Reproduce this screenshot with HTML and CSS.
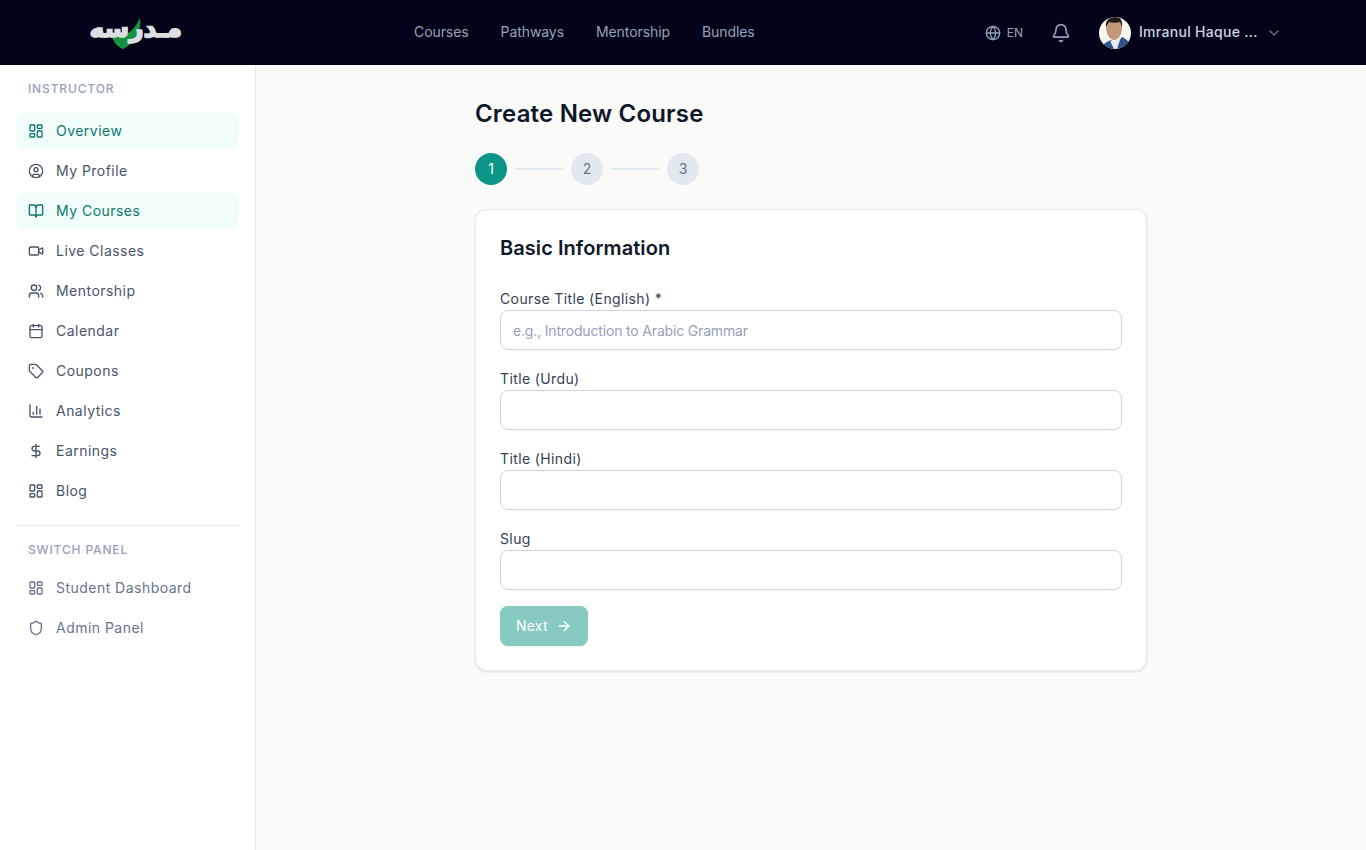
FILE: index.html
```html
<!DOCTYPE html>
<html lang="en">
<head>
<meta charset="utf-8">
<title>Create New Course</title>
<link rel="stylesheet" href="styles.css">
</head>
<body>
<svg class="sprite" aria-hidden="true">
  <symbol id="i-dash" viewBox="0 0 24 24"><rect x="3" y="3" width="7" height="9" rx="1"/><rect x="14" y="3" width="7" height="5" rx="1"/><rect x="14" y="12" width="7" height="9" rx="1"/><rect x="3" y="16" width="7" height="5" rx="1"/></symbol>
  <symbol id="i-user" viewBox="0 0 24 24"><circle cx="12" cy="12" r="10"/><circle cx="12" cy="10" r="3"/><path d="M7 20.662V19a2 2 0 0 1 2-2h6a2 2 0 0 1 2 2v1.662"/></symbol>
  <symbol id="i-book" viewBox="0 0 24 24"><path d="M12 7v14"/><path d="M3 18a1 1 0 0 1-1-1V4a1 1 0 0 1 1-1h5a4 4 0 0 1 4 4 4 4 0 0 1 4-4h5a1 1 0 0 1 1 1v13a1 1 0 0 1-1 1h-6a3 3 0 0 0-3 3 3 3 0 0 0-3-3z"/></symbol>
  <symbol id="i-video" viewBox="0 0 24 24"><path d="m16 13 5.223 3.482a.5.5 0 0 0 .777-.416V7.87a.5.5 0 0 0-.752-.432L16 10.5"/><rect x="2" y="6" width="14" height="12" rx="2"/></symbol>
  <symbol id="i-users" viewBox="0 0 24 24"><path d="M16 21v-2a4 4 0 0 0-4-4H6a4 4 0 0 0-4 4v2"/><circle cx="9" cy="7" r="4"/><path d="M22 21v-2a4 4 0 0 0-3-3.87"/><path d="M16 3.13a4 4 0 0 1 0 7.75"/></symbol>
  <symbol id="i-cal" viewBox="0 0 24 24"><path d="M8 2v4"/><path d="M16 2v4"/><rect x="3" y="4" width="18" height="18" rx="2"/><path d="M3 10h18"/></symbol>
  <symbol id="i-tag" viewBox="0 0 24 24"><path d="M12.586 2.586A2 2 0 0 0 11.172 2H4a2 2 0 0 0-2 2v7.172a2 2 0 0 0 .586 1.414l8.704 8.704a2.426 2.426 0 0 0 3.42 0l6.58-6.58a2.426 2.426 0 0 0 0-3.42z"/><circle cx="7.5" cy="7.5" r=".5"/></symbol>
  <symbol id="i-chart" viewBox="0 0 24 24"><path d="M3 3v16a2 2 0 0 0 2 2h16"/><path d="M18 17V9"/><path d="M13 17V5"/><path d="M8 17v-3"/></symbol>
  <symbol id="i-dollar" viewBox="0 0 24 24"><path d="M12 2v20"/><path d="M17 5H9.5a3.5 3.5 0 0 0 0 7h5a3.5 3.5 0 0 1 0 7H6"/></symbol>
  <symbol id="i-shield" viewBox="0 0 24 24"><path d="M20 13c0 5-3.5 7.5-7.66 8.95a1 1 0 0 1-.67-.01C7.5 20.5 4 18 4 13V6a1 1 0 0 1 1-1c2 0 4.5-1.2 6.24-2.72a1.17 1.17 0 0 1 1.52 0C14.51 3.81 17 5 19 5a1 1 0 0 1 1 1z"/></symbol>
  <symbol id="i-globe" viewBox="0 0 24 24"><circle cx="12" cy="12" r="10"/><path d="M12 2a14.5 14.5 0 0 0 0 20 14.5 14.5 0 0 0 0-20"/><path d="M2 12h20"/></symbol>
  <symbol id="i-bell" viewBox="0 0 24 24"><path d="M10.268 21a2 2 0 0 0 3.464 0"/><path d="M3.262 15.326A1 1 0 0 0 4 17h16a1 1 0 0 0 .74-1.673C19.41 13.956 18 12.499 18 8A6 6 0 0 0 6 8c0 4.499-1.411 5.956-2.738 7.326"/></symbol>
  <symbol id="i-chev" viewBox="0 0 24 24"><path d="m6 9 6 6 6-6"/></symbol>
  <symbol id="i-arrow" viewBox="0 0 24 24"><path d="M5 12h14"/><path d="m12 5 7 7-7 7"/></symbol>
</svg>

<header class="topbar">
  <a class="logo" href="#">
    <svg class="logo-shield" viewBox="0 0 30 32" aria-hidden="true"><path d="M29 0c1 6 0 11-2 15-2 6-8 13-15 16C7 29 2 25 1 17c6 2 15 0 20-5 4-4 6-8 8-12z"/></svg>
    <span class="logo-text" lang="ar" dir="rtl">مـدرسه</span>
  </a>
  <nav class="topnav">
    <a href="#">Courses</a>
    <a href="#">Pathways</a>
    <a href="#">Mentorship</a>
    <a href="#">Bundles</a>
  </nav>
  <div class="top-actions">
    <button class="lang"><svg class="ic ic-16"><use href="#i-globe"/></svg><span>EN</span></button>
    <button class="bell"><svg class="ic ic-20"><use href="#i-bell"/></svg></button>
    <button class="account">
      <svg class="avatar" viewBox="0 0 32 32" aria-hidden="true">
        <rect width="32" height="32" fill="#f7f6f3"/>
        <path d="M2 32c0-4 4-6 10-9l4 5 7-8c4 2 7 4 9 9v3z" fill="#2f5384"/>
        <path d="M11 24l4 8h3l4-12-5 5z" fill="#e8ecf0"/>
        <path d="M7 10c0-5 4-8 9-8 4 0 7 3 7 8 0 7-3 13-8 13-4 0-8-6-8-13z" fill="#c4967a"/>
        <path d="M7 10C6 4 10 0 16 0c5 0 8 3 7 10-1-2-1-4-2-5-4 1-8 1-11 0-1 2-2 3-3 5z" fill="#221a17"/>
      </svg>
      <span class="account-name">Imranul Haque ...</span>
      <svg class="ic ic-16 chev"><use href="#i-chev"/></svg>
    </button>
  </div>
</header>

<div class="shell">
  <aside class="sidebar">
    <h2 class="side-label">Instructor</h2>
    <ul class="side-list">
      <li><a class="side-link active" href="#"><svg class="ic ic-16"><use href="#i-dash"/></svg>Overview</a></li>
      <li><a class="side-link" href="#"><svg class="ic ic-16"><use href="#i-user"/></svg>My Profile</a></li>
      <li><a class="side-link active" href="#"><svg class="ic ic-16"><use href="#i-book"/></svg>My Courses</a></li>
      <li><a class="side-link" href="#"><svg class="ic ic-16"><use href="#i-video"/></svg>Live Classes</a></li>
      <li><a class="side-link" href="#"><svg class="ic ic-16"><use href="#i-users"/></svg>Mentorship</a></li>
      <li><a class="side-link" href="#"><svg class="ic ic-16"><use href="#i-cal"/></svg>Calendar</a></li>
      <li><a class="side-link" href="#"><svg class="ic ic-16"><use href="#i-tag"/></svg>Coupons</a></li>
      <li><a class="side-link" href="#"><svg class="ic ic-16"><use href="#i-chart"/></svg>Analytics</a></li>
      <li><a class="side-link" href="#"><svg class="ic ic-16"><use href="#i-dollar"/></svg>Earnings</a></li>
      <li><a class="side-link" href="#"><svg class="ic ic-16"><use href="#i-dash"/></svg>Blog</a></li>
    </ul>
    <div class="side-switch">
      <h2 class="side-label side-label-tight">Switch Panel</h2>
      <ul class="side-list">
        <li><a class="side-link muted" href="#"><svg class="ic ic-16"><use href="#i-dash"/></svg>Student Dashboard</a></li>
        <li><a class="side-link muted" href="#"><svg class="ic ic-16"><use href="#i-shield"/></svg>Admin Panel</a></li>
      </ul>
    </div>
  </aside>

  <main class="main">
    <div class="content">
      <h1 class="page-title">Create New Course</h1>
      <div class="steps">
        <span class="step current">1</span>
        <span class="step-line"></span>
        <span class="step">2</span>
        <span class="step-line"></span>
        <span class="step">3</span>
      </div>
      <form class="card">
        <h2 class="card-title">Basic Information</h2>
        <div class="fields">
          <div class="field">
            <label class="field-label" for="t-en">Course Title (English) *</label>
            <input class="field-input" id="t-en" type="text" placeholder="e.g., Introduction to Arabic Grammar">
          </div>
          <div class="field">
            <label class="field-label" for="t-ur">Title (Urdu)</label>
            <input class="field-input" id="t-ur" type="text">
          </div>
          <div class="field">
            <label class="field-label" for="t-hi">Title (Hindi)</label>
            <input class="field-input" id="t-hi" type="text">
          </div>
          <div class="field">
            <label class="field-label" for="slug">Slug</label>
            <input class="field-input" id="slug" type="text">
          </div>
        </div>
        <button class="next" type="button">Next<svg class="ic ic-16"><use href="#i-arrow"/></svg></button>
      </form>
    </div>
  </main>
</div>
</body>
</html>
```

FILE: styles.css
```css
* { box-sizing: border-box; }
html, body { margin: 0; height: 100%; }
body {
  font-family: Inter, "Liberation Sans", sans-serif;
  font-size: 14px;
  line-height: 20px;
  color: #0f172a;
  background: #fafaf9;
  overflow: hidden;
}
a { text-decoration: none; color: inherit; }
button { font: inherit; background: none; border: 0; padding: 0; color: inherit; }
ul { list-style: none; margin: 0; padding: 0; }
.sprite { display: none; }
.ic {
  fill: none;
  stroke: currentColor;
  stroke-width: 2;
  stroke-linecap: round;
  stroke-linejoin: round;
  flex: none;
}
.ic-16 { width: 16px; height: 16px; }
.ic-20 { width: 20px; height: 20px; }

/* Top bar */
.topbar {
  height: 65px;
  background: #020319;
  display: flex;
  align-items: center;
  padding: 0 84px 0 90px;
  color: #94a3b8;
}
.logo {
  width: 92px;
  height: 36px;
  position: relative;
  display: block;
  flex: none;
}
.logo-shield {
  position: absolute;
  left: 21px;
  top: 3px;
  width: 30px;
  height: 32px;
  fill: #15913f;
}
.logo-text {
  position: absolute;
  left: 0;
  right: 0;
  top: -1px;
  font-family: "DejaVu Sans", sans-serif;
  font-weight: 700;
  font-size: 25px;
  line-height: 30px;
  color: #dcdfe1;
  -webkit-text-stroke: 1.6px #dcdfe1;
  text-align: right;
  white-space: nowrap;
}
.topnav {
  display: flex;
  gap: 32px;
  margin-left: 232px;
  padding-bottom: 2px;
  letter-spacing: -.08px;
}
.top-actions {
  margin-left: auto;
  display: flex;
  align-items: center;
}
.lang {
  display: flex;
  align-items: center;
  gap: 6px;
  font-size: 12px;
  font-weight: 400;
  color: #94a3b8;
}
.bell { display: flex; margin-left: 28px; color: #94a3b8; }
.account {
  display: flex;
  align-items: center;
  margin-left: 28px;
  font-weight: 500;
  color: #cbd5e1;
}
.avatar { width: 32px; height: 32px; border-radius: 50%; display: block; }
.account-name {
  margin-left: 8px;
  width: 119px;
  white-space: nowrap;
  text-align: left;
  padding-bottom: 2px;
  letter-spacing: .3px;
}
.chev { margin-left: 8px; color: #64748b; }

/* Shell */
.shell { display: flex; height: 785px; }
.sidebar {
  width: 256px;
  flex: none;
  background: #fff;
  border-right: 1px solid #e2e8f0;
  padding: 16px 16px 0;
}
.side-label {
  margin: 0 0 16px;
  padding: 0 12px;
  font-size: 12px;
  line-height: 16px;
  font-weight: 500;
  letter-spacing: .85px;
  text-transform: uppercase;
  color: #94a3b8;
}
.side-label-tight { margin-bottom: 12px; }
.side-list { display: flex; flex-direction: column; gap: 4px; }
.side-link {
  height: 36px;
  display: flex;
  align-items: center;
  gap: 12px;
  padding: 0 12px;
  border-radius: 8px;
  font-weight: 425;
  letter-spacing: .47px;
  color: #475569;
}
.side-link.active { background: #f0fdfa; color: #0f766e; }
.side-link.muted { color: #64748b; }
.side-switch {
  margin-top: 16px;
  padding-top: 16px;
  border-top: 1px solid #e2e8f0;
}

/* Main */
.main { flex: 1; min-width: 0; padding-top: 33px; }
.content { width: 672px; margin: 0 auto; }
.page-title {
  margin: 0 0 23px;
  font-size: 24px;
  line-height: 32px;
  font-weight: 600;
  letter-spacing: .18px;
  color: #0f172a;
}
.steps { display: flex; align-items: center; gap: 8px; margin-bottom: 24px; }
.step {
  width: 32px;
  height: 32px;
  border-radius: 50%;
  display: flex;
  align-items: center;
  justify-content: center;
  background: #e2e8f0;
  color: #64748b;
  font-weight: 400;
}
.step.current { background: #0d9488; color: #fff; }
.step-line { width: 48px; height: 2px; background: #e2e8f0; }
.card {
  background: #fff;
  border: 1px solid #e2e8f0;
  border-radius: 12px;
  padding: 24px;
  box-shadow: 0 1px 3px rgba(15, 23, 42, .1);
}
.card-title {
  margin: 0 0 28px;
  font-size: 20px;
  line-height: 28px;
  font-weight: 600;
  letter-spacing: .06px;
  color: #0f172a;
}
.fields { display: flex; flex-direction: column; gap: 20px; }
.field { display: flex; flex-direction: column; }
.field-label {
  font-weight: 425;
  line-height: 18px;
  padding-bottom: 2px;
  letter-spacing: .38px;
  color: #334155;
}
.field-input {
  height: 40px;
  width: 100%;
  padding: 0 12px;
  border: 1px solid #cbd5e1;
  border-radius: 8px;
  background: #fff;
  font: inherit;
  color: #0f172a;
}
.field-input::placeholder { color: #94a3b8; opacity: 1; letter-spacing: -.17px; }
.next {
  margin-top: 16px;
  height: 40px;
  padding: 0 16px;
  display: flex;
  align-items: center;
  gap: 8px;
  border-radius: 8px;
  background: #86cac1;
  color: #fff;
  font-weight: 400;
  letter-spacing: .2px;
  box-shadow: 0 1px 2px rgba(15, 23, 42, .05);
}
```
